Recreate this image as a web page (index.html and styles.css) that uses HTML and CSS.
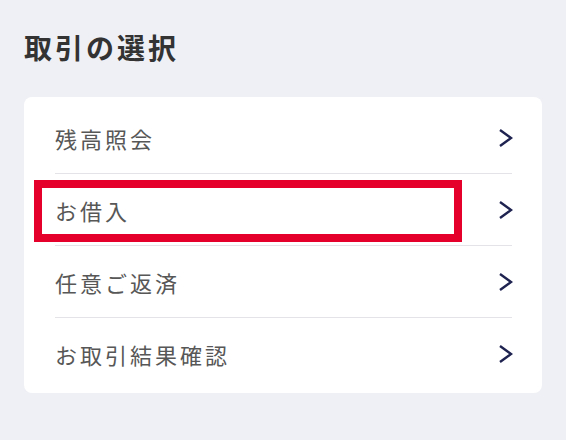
FILE: index.html
```html
<!DOCTYPE html>
<html lang="ja">
<head>
<meta charset="utf-8">
<link rel="stylesheet" href="styles.css">
</head>
<body>
<main class="page">
  <h1 class="title">取引の選択</h1>
  <ul class="card">
    <li class="row"><span class="label">残高照会</span><svg class="chev" viewBox="0 0 16 20"><path d="M3 2 L14 10 L3 18"/></svg></li>
    <li class="row"><span class="label">お借入</span><svg class="chev" viewBox="0 0 16 20"><path d="M3 2 L14 10 L3 18"/></svg><span class="highlight"></span></li>
    <li class="row"><span class="label">任意ご返済</span><svg class="chev" viewBox="0 0 16 20"><path d="M3 2 L14 10 L3 18"/></svg></li>
    <li class="row"><span class="label">お取引結果確認</span><svg class="chev" viewBox="0 0 16 20"><path d="M3 2 L14 10 L3 18"/></svg></li>
  </ul>
</main>
</body>
</html>
```

FILE: styles.css
```css
html, body {
  margin: 0;
  padding: 0;
  background: #eff0f5;
}
.page {
  padding: 27px 24px 0 24px;
  font-family: "Noto Sans CJK JP", "Noto Sans", sans-serif;
}
.title {
  margin: 0;
  font-size: 28px;
  line-height: 40px;
  font-weight: 700;
  letter-spacing: 3px;
  color: #333333;
}
.card {
  list-style: none;
  margin: 30px 0 0 0;
  width: 518px;
  box-sizing: border-box;
  padding: 5px 30px 3px 31px;
  background: #ffffff;
  border-radius: 8px;
}
.row {
  position: relative;
  display: flex;
  align-items: center;
  justify-content: space-between;
  height: 72px;
  box-sizing: border-box;
  border-bottom: 1px solid #e3e3e8;
}
.row:last-child {
  border-bottom: none;
}
.label {
  font-size: 22px;
  letter-spacing: 3px;
  color: #575757;
}
.chev {
  width: 16px;
  height: 20px;
  margin-right: -1px;
}
.chev path {
  fill: none;
  stroke: #1f2350;
  stroke-width: 2.4;
}
.highlight {
  position: absolute;
  left: -21px;
  top: 6px;
  width: 428px;
  height: 62px;
  box-sizing: border-box;
  border: 8px solid #e4002b;
}
```
